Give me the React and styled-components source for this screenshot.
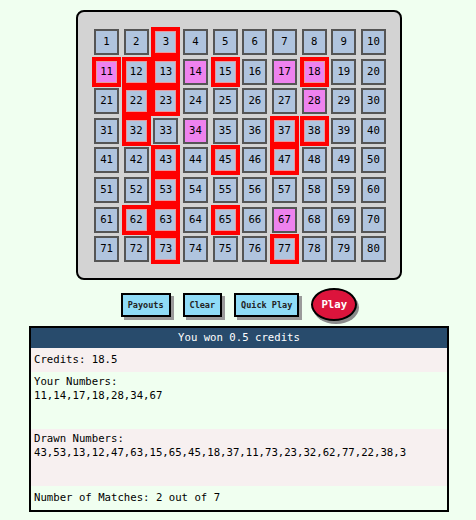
import { createGlobalStyle, styled } from 'styled-components';

const GlobalStyle = createGlobalStyle`
  body {
    margin: 8px;
    background-color: #f0fff0;
    font-family: 'DejaVu Sans Mono', monospace;
    font-size: 8pt;
    line-height: 14px;
  }
`;

const Page = styled.div`
  display: flex;
  flex-direction: column;
  align-items: center;
  padding: 2px 0 0 2px;
`;

const Board = styled.div`
  display: grid;
  grid-template-columns: repeat(10, 25px);
  grid-auto-rows: 26px;
  column-gap: 4.67px;
  row-gap: 3.6px;
  padding: 17px 14px 16px 16px;
  background-color: #d3d3d3;
  border: 2px solid #000;
  border-radius: 8px;
`;

const Cell = styled.div`
  display: flex;
  justify-content: center;
  align-items: center;
  box-sizing: border-box;
  border: 2px solid ${(props) => (props.$drawn ? '#ff0000' : '#555')};
  background-color: ${(props) => (props.$picked ? '#ee82ee' : '#b0c4de')};
  box-shadow: ${(props) =>
    props.$drawn ? '0 0 0 2px #ff0000, inset 0 0 0 1px #e89aa0' : 'none'};
  color: #000;
  font-size: 8pt;
`;

const Controls = styled.div`
  display: flex;
  align-items: center;
  gap: 12px;
  margin: 8px 0 5px;
`;

const Button = styled.button`
  height: 24px;
  padding: 0 5px;
  border: 2px solid #000;
  background-color: #8fdcf7;
  box-shadow: 3px 3px 0 #9a9a9a;
  font-family: 'DejaVu Sans Mono', monospace;
  font-size: 8.5px;
  font-weight: bold;
  color: #222;
  cursor: pointer;
`;

const PlayButton = styled.button`
  width: 46px;
  height: 33px;
  padding: 0;
  border: 2px solid #000;
  border-radius: 50%;
  background-color: #dc143c;
  box-shadow: 2px 3px 0 #8a8a8a;
  font-family: 'DejaVu Sans Mono', monospace;
  font-size: 8pt;
  font-weight: bold;
  color: #fff;
  cursor: pointer;
`;

const Results = styled.div`
  width: 416px;
  border: 2px solid #000;
`;

const Header = styled.div`
  padding: 3px 0;
  background-color: #284b6c;
  color: #fff;
  text-align: center;
`;

const Row = styled.div`
  padding: ${(props) => (props.$tall ? '3px 3px 26px' : '5px 3px')};
  background-color: ${(props) => (props.$pink ? '#f7f0f0' : '#f0fff0')};
  color: #000;
`;

const picked = [11, 14, 17, 18, 28, 34, 67];
const drawn = [
  43, 53, 13, 12, 47, 63, 15, 65, 45, 18, 37, 11, 73, 23, 32, 62, 77, 22, 38, 3,
];
const numbers = Array.from({ length: 80 }, (_, i) => i + 1);

const App = () => {
  const matches = picked.filter((n) => drawn.includes(n)).length;

  return (
    <Page>
      <GlobalStyle />
      <Board>
        {numbers.map((n) => (
          <Cell key={n} $picked={picked.includes(n)} $drawn={drawn.includes(n)}>
            {n}
          </Cell>
        ))}
      </Board>
      <Controls>
        <Button>Payouts</Button>
        <Button>Clear</Button>
        <Button>Quick Play</Button>
        <PlayButton>Play</PlayButton>
      </Controls>
      <Results>
        <Header>You won 0.5 credits</Header>
        <Row $pink>Credits: 18.5</Row>
        <Row $tall>
          Your Numbers:
          <br />
          {picked.join(',')}
        </Row>
        <Row $pink $tall>
          Drawn Numbers:
          <br />
          {drawn.join(',')}
        </Row>
        <Row>
          Number of Matches: {matches} out of {picked.length}
        </Row>
      </Results>
    </Page>
  );
};

export default App;
